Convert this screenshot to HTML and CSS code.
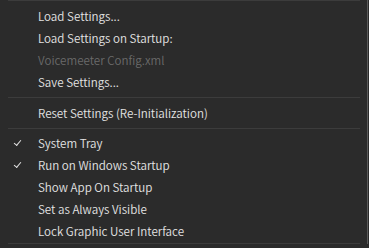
FILE: index.html
```html
<!DOCTYPE html>
<html lang="en">
<head>
    <meta charset="utf-8">
    <title>Settings Menu</title>
    <link rel="stylesheet" href="styles.css">
</head>
<body>
    <div class="menu">
        <div class="menu-item">Load Settings...</div>
        <div class="menu-item">Load Settings on Startup:</div>
        <div class="menu-item disabled">Voicemeeter Config.xml</div>
        <div class="menu-item">Save Settings...</div>
        <div class="separator wide"></div>
        <div class="menu-item">Reset Settings (Re-Initialization)</div>
        <div class="separator"></div>
        <div class="menu-item checked">System Tray</div>
        <div class="menu-item checked">Run on Windows Startup</div>
        <div class="menu-item">Show App On Startup</div>
        <div class="menu-item">Set as Always Visible</div>
        <div class="menu-item">Lock Graphic User Interface</div>
    </div>
</body>
</html>
```

FILE: styles.css
```css
:root {
    --menu-bg: #2b2b2b;
    --menu-text: #e4e4e4;
    --menu-disabled: #6a6a6a;
    --menu-line: #3c3c3c;
    --menu-edge: #5a5a5a;
}

body {
    margin: 0;
    background: var(--menu-bg);
    font-family: "Noto Sans CJK KR", "Noto Sans", sans-serif;
    font-size: 11.6px;
    font-weight: 350;
    color: var(--menu-text);
}

.menu {
    width: 352px;
    height: 244px;
    margin-left: 8px;
    padding-top: 4px;
    border-top: 1px solid var(--menu-line);
    border-bottom: 1px solid var(--menu-line);
    box-sizing: border-box;
    position: relative;
}

.menu::after {
    content: "";
    position: absolute;
    top: -1px;
    right: -8px;
    width: 1px;
    height: 248px;
    background: var(--menu-edge);
}

.menu-item {
    height: 22px;
    line-height: 22px;
    padding-left: 30px;
    position: relative;
    white-space: nowrap;
}

.menu-item.disabled {
    color: var(--menu-disabled);
}

.menu-item.checked::before {
    content: "";
    position: absolute;
    left: 6px;
    top: 8px;
    width: 6px;
    height: 3px;
    border-left: 1px solid var(--menu-text);
    border-bottom: 1px solid var(--menu-text);
    transform: rotate(-50deg);
}

.separator {
    height: 8px;
    display: flex;
    align-items: center;
}

.separator.wide {
    height: 9px;
}

.separator::before {
    content: "";
    flex: 1;
    height: 1px;
    background: var(--menu-line);
}
```
